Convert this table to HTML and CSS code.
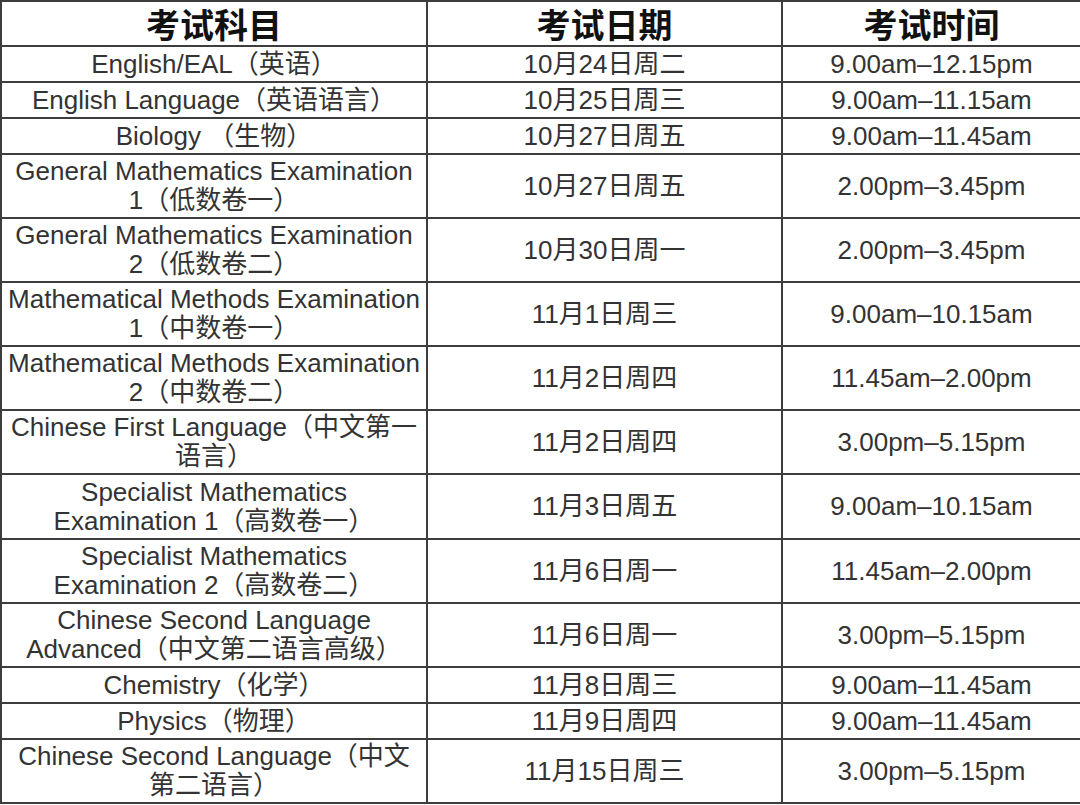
FILE: index.html
```html
<!DOCTYPE html>
<html lang="zh-CN">
<head>
<meta charset="utf-8">
<title>考试时间表</title>
<link rel="stylesheet" href="styles.css">
</head>
<body>
<table class="exam">
  <colgroup>
    <col class="c1">
    <col class="c2">
    <col class="c3">
  </colgroup>
  <thead>
    <tr class="head">
      <th>考试科目</th>
      <th>考试日期</th>
      <th>考试时间</th>
    </tr>
  </thead>
  <tbody>
    <tr class="s"><td>English/EAL（英语）</td><td>10月24日周二</td><td>9.00am–12.15pm</td></tr>
    <tr class="s"><td>English Language（英语语言）</td><td>10月25日周三</td><td>9.00am–11.15am</td></tr>
    <tr class="s"><td>Biology （生物）</td><td>10月27日周五</td><td>9.00am–11.45am</td></tr>
    <tr class="d"><td>General Mathematics Examination<br>1（低数卷一）</td><td>10月27日周五</td><td>2.00pm–3.45pm</td></tr>
    <tr class="d"><td>General Mathematics Examination<br>2（低数卷二）</td><td>10月30日周一</td><td>2.00pm–3.45pm</td></tr>
    <tr class="d"><td>Mathematical Methods Examination<br>1（中数卷一）</td><td>11月1日周三</td><td>9.00am–10.15am</td></tr>
    <tr class="d"><td>Mathematical Methods Examination<br>2（中数卷二）</td><td>11月2日周四</td><td>11.45am–2.00pm</td></tr>
    <tr class="d"><td>Chinese First Language（中文第一<br>语言）</td><td>11月2日周四</td><td>3.00pm–5.15pm</td></tr>
    <tr class="d tall"><td>Specialist Mathematics<br>Examination 1（高数卷一）</td><td>11月3日周五</td><td>9.00am–10.15am</td></tr>
    <tr class="d"><td>Specialist Mathematics<br>Examination 2（高数卷二）</td><td>11月6日周一</td><td>11.45am–2.00pm</td></tr>
    <tr class="d"><td>Chinese Second Language<br>Advanced（中文第二语言高级）</td><td>11月6日周一</td><td>3.00pm–5.15pm</td></tr>
    <tr class="s"><td>Chemistry（化学）</td><td>11月8日周三</td><td>9.00am–11.45am</td></tr>
    <tr class="s"><td>Physics（物理）</td><td>11月9日周四</td><td>9.00am–11.45am</td></tr>
    <tr class="d"><td>Chinese Second Language（中文<br>第二语言）</td><td>11月15日周三</td><td>3.00pm–5.15pm</td></tr>
  </tbody>
</table>
</body>
</html>
```
FILE: styles.css
```css
html, body {
  margin: 0;
  padding: 0;
  background: #ffffff;
}

.exam {
  width: 1080px;
  table-layout: fixed;
  border-collapse: collapse;
  font-family: "Liberation Sans", "Noto Sans CJK SC", sans-serif;
  font-size: 26px;
  color: #333333;
  border: 2px solid #3d3d3d;
}

.c1 { width: 426px; }
.c2 { width: 355px; }
.c3 { width: 299px; }

.exam th,
.exam td {
  border: 2px solid #3d3d3d;
  text-align: center;
  vertical-align: middle;
  padding: 0;
  line-height: 29px;
  white-space: nowrap;
}

.head { height: 45px; }

.exam th {
  font-family: "Noto Sans CJK SC", sans-serif;
  font-weight: 700;
  font-size: 34px;
  line-height: 40px;
  color: #111111;
}

.s { height: 36px; }
.d { height: 64px; }
.tall { height: 65px; }
```
